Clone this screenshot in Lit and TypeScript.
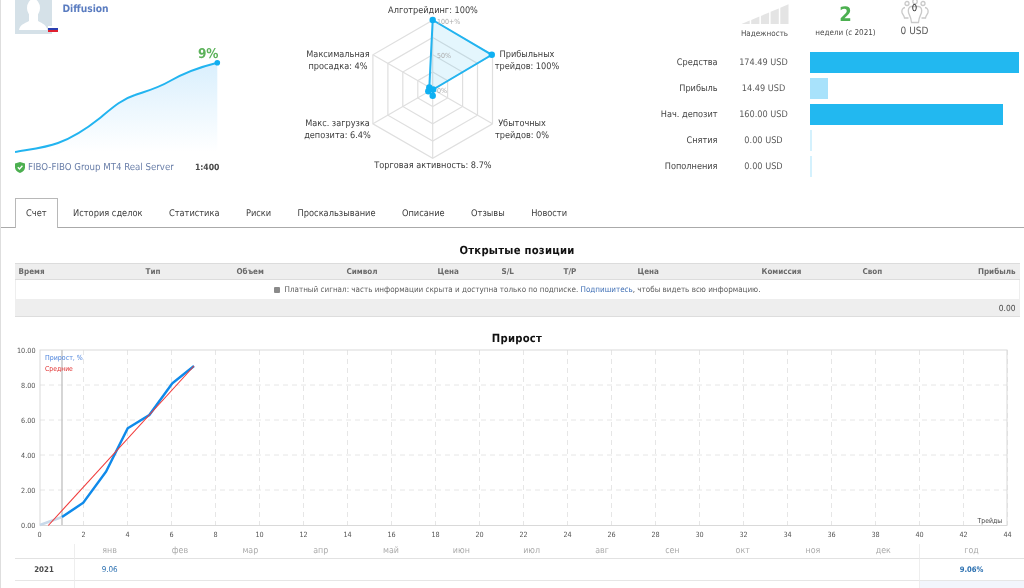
import { LitElement, html, css, svg } from "lit";
import { customElement } from "lit/decorators.js";

const months = ["янв","фев","мар","апр","май","июн","июл","авг","сен","окт","ноя","дек"];
const cols: [string, number][] = [["Время",127],["Тип",91],["Объем",110],["Символ",91],["Цена",64],["S/L",62],["T/P",74],["Цена",124],["Комиссия",101]];
const tabs = ["Счет","История сделок","Статистика","Риски","Проскальзывание","Описание","Отзывы","Новости"];
const rows: [string,string,number,string][] = [
  ["Средства","174.49 USD",209,"#22b8f0"],
  ["Прибыль","14.49 USD",17.5,"#a8e2fb"],
  ["Нач. депозит","160.00 USD",192.5,"#22b8f0"],
  ["Снятия","0.00 USD",1.5,"#d4f1fd"],
  ["Пополнения","0.00 USD",1.5,"#d4f1fd"],
];

const cx = 432.7, cy = 89.3, R = 69;
const ang = [ -90, -30, 30, 90, 150, 210 ].map(a => a * Math.PI / 180);
const ring = (r: number) => ang.map(a => `${(cx + r*Math.cos(a)).toFixed(1)},${(cy + r*Math.sin(a)).toFixed(1)}`).join(" ");
const dataPts: [number,number][] = [[432.7,20],[491.8,54.8],[433.2,89.5],[432.7,95.7],[428.3,91.3],[429.3,87.5]];

@customElement("app-root")
export class AppRoot extends LitElement {
  static styles = css`
    :host { display:block; width:1024px; height:588px; overflow:hidden; position:relative; background:#fff;
      font-family:"DejaVu Sans Condensed","DejaVu Sans",sans-serif; font-stretch:condensed; font-size:9px; color:#4a4a4a; text-rendering:geometricPrecision; box-sizing:border-box; border-left:1.5px solid #dedede; }
    .frame { margin-left:-1.5px; filter:blur(0.3px); }
    svg { display:block; overflow:hidden; }
    svg text { font-family:"DejaVu Sans Condensed","DejaVu Sans",sans-serif; font-stretch:condensed; }
    .top { display:grid; grid-template-columns:290px 360px 374px; height:198px; }
    .left { padding-left:15px; }
    .who { display:flex; height:40px; }
    .avatar { width:37px; height:34px; flex:none; }
    .name { position:relative; margin-left:11px; font-size:10.2px; color:#5a7cc0; font-weight:700; line-height:19px; }
    .flag { position:absolute; left:-15px; top:26px; }
    .server { display:flex; width:205px; justify-content:space-between; align-items:center; height:17px; }
    .srv-name { display:flex; align-items:center; gap:3.5px; color:#6a7fa9; font-size:9.6px; }
    .lev { font-weight:700; color:#4a4a4a; font-size:8.6px; }
    .stats { display:grid; grid-template-columns:80px 70px 6px 80px 58px; height:52px; text-align:center; }
    .stat { display:flex; flex-direction:column; align-items:center; font-size:8px; }
    .rel { grid-column:2; padding-top:4px; }
    .rel span { margin-top:5px; }
    .weeks { grid-column:4; }
    .big { font-size:20px; font-weight:700; color:#4cb050; line-height:29px; height:28px; }
    .people { grid-column:5; position:relative; }
    .people b { position:absolute; top:4px; left:0; right:0; font-weight:400; color:#222; font-size:9.5px; line-height:10px; }
    .people span { font-size:10px; margin-top:2px; color:#5a5a5a; }
    .row { display:grid; grid-template-columns:68px 92px 1fr; height:26px; align-items:start; }
    .row .l { text-align:right; line-height:23px; color:#444; font-size:9.1px; }
    .row .v { text-align:center; line-height:23px; color:#5a5a5a; font-size:9.1px; }
    .bar { height:20.5px; margin-left:.5px; }
    .tabs { display:flex; height:29px; padding-left:15px; border-bottom:1px solid #aaa; }
    .tab { padding:0 13.2px; line-height:31px; color:#3c3c3c; font-size:9.2px; white-space:nowrap; }
    .tab.on { height:30px; box-sizing:border-box; padding:0 10.5px; margin-right:1.8px; border:1px solid #b8b8b8; border-bottom:none; background:#fff; line-height:29px; }
    h2 { margin:0 4px 0 15px; width:1005px; text-align:center; color:#111; font-weight:700; font-size:11.2px; height:15px; line-height:16px; letter-spacing:.25px; }
    .h1 { margin-top:15px; }
    .tbl { margin:5px 4px 0 15px; width:1005px; border-bottom:1px solid #ddd; box-sizing:border-box; }
    .tr { display:flex; height:17px; align-items:center; background:#eeeeee; padding:0 4px; box-sizing:border-box; border-top:1px solid #dcdcdc; border-bottom:1px solid #dcdcdc; font-size:8px; font-weight:700; color:#6a6a6a; }
    .tr span { flex:none; }
    .tr .end { margin-left:auto; }
    .msg { height:19px; display:flex; align-items:center; justify-content:center; gap:5px; font-size:8px; color:#5a5a5a; border-left:1px solid #eee; border-right:1px solid #eee; box-sizing:border-box; }
    .lock { width:6px; height:6px; background:#8a8a8a; border-radius:1px; flex:none; }
    .msg a { color:#3f6fb5; }
    .tot { height:17px; background:#eeeeee; display:flex; justify-content:flex-end; align-items:center; padding-right:4px; font-size:8.4px; color:#4a4a4a; }
    .h2 { margin-top:14px; }
    .year { display:grid; grid-template-columns:60px repeat(12, 1fr) 105px; margin-left:15px; width:1009px; }
    .year > div { text-align:center; }
    .hd { height:14px; line-height:14px; color:#aaa; font-size:8.8px; border-bottom:1px solid #e2e2e2; }
    .cell { height:21px; line-height:21px; color:#2a6fb0; font-size:8px; border-bottom:1px solid #e6e6e6; }
    .sep { border-right:1.5px solid #eee; }
    .sepl { border-left:1.5px solid #eee; }
    .yr { color:#4a4a4a; font-weight:700; font-size:7.8px; }
    .pct { font-weight:700; font-size:7.6px; }
    .blank { height:12px; }
    .total { background:#f2f5fc; font-weight:700; color:#2a6fb0; line-height:21px; height:21px; font-size:7.6px; }
    .hash { color:#4a4a4a; line-height:21px; text-align:right !important; padding-right:29px; font-size:8px; }
  `;

  render() {
    const vgrid = Array.from({length:22},(_,i)=>83.5+44*i);
    const hgrid = [2,4,6,8].map(v=>525-17.5*v);
    return html`<div class="frame">
    <div class="top">
      <div class="left">
        <div class="who">
          <svg class="avatar" viewBox="15 0 37 34">
            <rect x="15" y="0" width="37" height="34" fill="#d5e1e8"/>
            <ellipse cx="33.500" cy="8" rx="6.500" ry="9" fill="#fff"/>
            <path d="M19 30C20 25 24 23.500 29 21L29 14L38 14L38 21C43 23.500 46 25 47.500 30Z" fill="#fff"/>
          </svg>
          <div class="name">
            <svg class="flag" width="10" height="6" viewBox="0 0 10 6"><rect width="10" height="2" fill="#fff"/><rect y="2" width="10" height="2" fill="#2a3fb0"/><rect y="4" width="10" height="2" fill="#e02030"/></svg>
            Diffusion
          </div>
        </div>
        <svg width="210" height="119" viewBox="15 40 210 119">
          <defs><linearGradient id="g" x1="0" y1="0" x2="0" y2="1"><stop offset="0" stop-color="#d9effd"/><stop offset="1" stop-color="#ffffff"/></linearGradient></defs>
          <path d="M15 152C25 150 45 148 58 143C72 138 85 130 100 118C112 108 122 99 135 95C150 90 158 88 170 81C182 74 200 67 217.3 62.7L217.3 152Z" fill="url(#g)"/>
          <path d="M15 152C25 150 45 148 58 143C72 138 85 130 100 118C112 108 122 99 135 95C150 90 158 88 170 81C182 74 200 67 217.3 62.7" fill="none" stroke="#22b4f0" stroke-width="2"/>
          <circle cx="217.3" cy="62.7" r="2.8" fill="#10aef0"/>
          <text x="218.500" y="57.500" text-anchor="end" font-size="13.500" font-weight="700" fill="#5cb25a">9%</text>
        </svg>
        <div class="server">
          <div class="srv-name">
            <svg width="10" height="11" viewBox="0 0 10 11"><path d="M5 0L10 1.5V5.5C10 8 8 10 5 11C2 10 0 8 0 5.5V1.5Z" fill="#4caf50"/><path d="M2.8 5.3L4.5 7L7.4 3.8" fill="none" stroke="#fff" stroke-width="1.3"/></svg>
            FIBO-FIBO Group MT4 Real Server
          </div>
          <div class="lev">1:400</div>
        </div>
      </div>
      <svg width="360" height="198" viewBox="290 0 360 198">
        ${[1,2,3,4].map(k=>svg`<polygon points="${ring(R*k/4)}" fill="none" stroke="#dfdfdf" stroke-width="1.2"/>`)}
        ${ang.map(a=>svg`<line x1="${cx}" y1="${cy}" x2="${cx+R*Math.cos(a)}" y2="${cy+R*Math.sin(a)}" stroke="#dfdfdf" stroke-width="1.2"/>`)}
        <polygon points="${dataPts.map(p=>p.join(",")).join(" ")}" fill="#22b4f0" fill-opacity=".12" stroke="#22b4f0" stroke-width="2"/>
        ${dataPts.map(p=>svg`<circle cx="${p[0]}" cy="${p[1]}" r="3.200" fill="#0fb0f2"/>`)}
        <g font-size="7" fill="#aaa">
          <text x="437" y="23.500">100+%</text><text x="437" y="57.500">50%</text><text x="437" y="92.500">0%</text>
        </g>
        <g font-size="9.100" fill="#3c3c3c" text-anchor="middle">
          <text x="433" y="13.300">Алготрейдинг: 100%</text>
          <text x="527" y="57">Прибыльных</text><text x="527" y="69">трейдов: 100%</text>
          <text x="522" y="126">Убыточных</text><text x="522" y="138">трейдов: 0%</text>
          <text x="433" y="168">Торговая активность: 8.7%</text>
          <text x="337.500" y="126">Макс. загрузка</text><text x="337.500" y="138">депозита: 6.4%</text>
          <text x="338" y="57">Максимальная</text><text x="338" y="69">просадка: 4%</text>
        </g>
      </svg>
      <div>
        <div class="stats">
          <div class="stat rel">
            <svg width="50" height="20" viewBox="740 4 50 20">
              ${[0,1,2,3,4].map(i=>{const x=741.5+i*9.7,w=8.2,y1=24-(x-741.5)*20/47.8,y2=24-(x+w-741.5)*20/47.8;return svg`<polygon points="${x},24 ${x},${y1} ${x+w},${y2} ${x+w},24" fill="#e4e4e4"/>`;})}
            </svg>
            <span>Надежность</span>
          </div>
          <div class="stat weeks"><div class="big">2</div><span>недели (с 2021)</span></div>
          <div class="stat people">
            <svg width="30" height="24" viewBox="900 0 30 24" fill="none" stroke="#c9c9c9" stroke-width="1.300">
              <circle cx="907" cy="3.500" r="2"/><circle cx="915" cy="1.500" r="2.200"/><circle cx="923" cy="3.500" r="2"/>
              <path d="M905 7.500C902.500 8 901.500 10 902 12.500C902.500 14.500 904 15 904.500 18L908.500 18"/>
              <path d="M925 7.500C927.500 8 928.500 10 928 12.500C927.500 14.500 926 15 925.500 18L921.500 18"/>
              <path d="M911 6.500C908.500 7 908 10 908.500 12.500C909 15 911 16 911.500 22.500L918.500 22.500C919 16 921 15 921.500 12.500C922 10 921.500 7 919 6.500Z"/>
            </svg>
            <b>0</b>
            <span>0 USD</span>
          </div>
        </div>
        ${rows.map(r=>html`<div class="row"><div class="l">${r[0]}</div><div class="v">${r[1]}</div><div class="bar" style="width:${r[2]}px;background:${r[3]}"></div></div>`)}
      </div>
    </div>
    <div class="tabs">${tabs.map((t,i)=>html`<div class="tab ${i===0?"on":""}">${t}</div>`)}</div>
    <h2 class="h1">Открытые позиции</h2>
    <div class="tbl">
      <div class="tr">${cols.map(c=>html`<span style="width:${c[1]}px">${c[0]}</span>`)}<span>Своп</span><span class="end">Прибыль</span></div>
      <div class="msg"><i class="lock"></i><span>Платный сигнал: часть информации скрыта и доступна только по подписке. <a>Подпишитесь</a>, чтобы видеть всю информацию.</span></div>
      <div class="tot">0.00</div>
    </div>
    <h2 class="h2">Прирост</h2>
    <svg width="1024" height="198" viewBox="0 346 1024 198">
      ${hgrid.map(y=>svg`<line x1="40" x2="1007" y1="${y}" y2="${y}" stroke="#e6e6e6" stroke-dasharray="5 4"/>`)}
      ${vgrid.map(x=>svg`<line x1="${x}" x2="${x}" y1="350" y2="525" stroke="#e6e6e6" stroke-dasharray="5 4"/>`)}
      <rect x="40" y="350" width="967" height="175.500" fill="none" stroke="#d9d9d9"/>
      <line x1="62" x2="62" y1="350" y2="525" stroke="#c4c4c4" stroke-width="1.4"/>
      <polyline points="40,525 62,517" fill="none" stroke="#c8d9ea" stroke-width="2.500"/>
      <polyline points="62,517 83.300,502.700 106,471.700 127.700,428.300 149.300,415 172.300,383.300 194,366" fill="none" stroke="#0f8aea" stroke-width="2.500"/>
      <line x1="48.300" y1="525.500" x2="194" y2="366" stroke="#f03a3a" stroke-width="1.100"/>
      <text x="45" y="359.500" font-size="7" fill="#4a82dc">Прирост, %</text>
      <text x="45" y="370.500" font-size="6.800" fill="#e03030">Средние</text>
      <text x="1002" y="522.500" font-size="6.800" fill="#444" text-anchor="end">Трейды</text>
      ${[0,2,4,6,8,10].map(v=>svg`<text x="35.500" y="${527.5-17.5*v}" font-size="7.200" fill="#555" text-anchor="end">${v.toFixed(2)}</text>`)}
      ${Array.from({length:23},(_,i)=>svg`<text x="${39.5+44*i}" y="536.500" font-size="7.200" fill="#555" text-anchor="middle">${i*2}</text>`)}
    </svg>
    <div class="year">
      <div class="hd sep"></div>
      ${months.map(m=>html`<div class="hd">${m}</div>`)}
      <div class="hd sepl">год</div>
      <div class="cell yr sep">2021</div>
      <div class="cell">9.06</div>
      ${months.slice(1).map(()=>html`<div class="cell"></div>`)}
      <div class="cell sepl pct">9.06%</div>
      <div class="sep blank"></div>
      ${months.slice(0,11).map(()=>html`<div></div>`)}
      <div class="hash">7</div>
      <div class="total sepl">9.06%</div>
    </div>
    </div>`;
  }
}
